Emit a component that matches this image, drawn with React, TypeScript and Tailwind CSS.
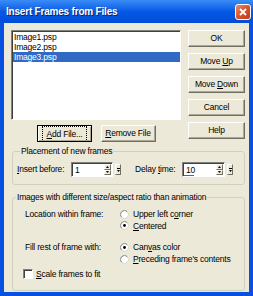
import React from 'react';

const font = "font-['Liberation_Sans',Arial,sans-serif]";

function U({ children }: { children: React.ReactNode }) {
  return <span className="underline underline-offset-1 decoration-1">{children}</span>;
}

function Btn({ children, className = '' }: { children: React.ReactNode; className?: string }) {
  return (
    <div className={`h-[17px] flex items-center justify-center bg-[#ece9d8] border border-t-white border-l-white border-r-[#716f64] border-b-[#716f64] shadow-[inset_-1px_-1px_0_#aca899] leading-none whitespace-nowrap ${className}`}>
      <span>{children}</span>
    </div>
  );
}

function Spin() {
  return (
    <div className="flex flex-col w-[7px] h-full">
      {[0, 1].map((i) => (
        <div key={i} className="flex-1 flex items-center justify-center bg-[#ece9d8] border border-t-white border-l-white border-r-[#716f64] border-b-[#716f64]">
          <svg width="3" height="2" viewBox="0 0 3 2">
            <path d={i === 0 ? 'M1.5 0 L3 2 L0 2 Z' : 'M0 0 L3 0 L1.5 2 Z'} fill="#000" />
          </svg>
        </div>
      ))}
    </div>
  );
}

function Pop() {
  return (
    <div className="w-[6px] h-[11px] flex flex-col items-center justify-center gap-[1px] bg-[#ece9d8] border border-t-white border-l-white border-r-[#716f64] border-b-[#716f64]">
      <div className="w-[3px] h-[1px] bg-black" />
      <svg width="3" height="2" viewBox="0 0 3 2"><path d="M0 0 L3 0 L1.5 2 Z" fill="#000" /></svg>
    </div>
  );
}

function NumField({ value, width, caret }: { value: string; width: string; caret?: boolean }) {
  return (
    <div className="flex items-center gap-[2px]">
      <div className={`relative ${width} h-[15px] flex bg-white border border-t-[#808080] border-l-[#808080] border-b-white border-r-white shadow-[inset_1px_1px_0_#404040]`}>
        <div className="flex-1 pl-[3px] pt-[1px] leading-[12px]">{value}</div>
        <div className="py-[1px] pr-[1px]"><Spin /></div>
        {caret && <div className="absolute left-[1px] bottom-0 w-[10px] h-[1px] bg-[#316ac5]" />}
      </div>
      <Pop />
    </div>
  );
}

function Radio({ checked }: { checked?: boolean }) {
  return (
    <svg width="9" height="9" viewBox="0 0 9 9" className="shrink-0">
      <circle cx="4.5" cy="4.5" r="4" fill="#fff" />
      <path d="M1.67 7.33 A4 4 0 0 1 7.33 1.67" stroke="#808080" fill="none" />
      <path d="M7.33 1.67 A4 4 0 0 1 1.67 7.33" stroke="#d8d5c6" fill="none" />
      {checked && <circle cx="4.5" cy="4.5" r="1.4" fill="#000" />}
    </svg>
  );
}

export default function App() {
  const files = ['Image1.psp', 'Image2.psp', 'Image3.psp'];
  return (
    <div className={`w-[253px] h-[296px] flex flex-col bg-[#0750e0] text-black text-[8.5px] tracking-[-0.2px] whitespace-nowrap ${font}`}>
      <div className="h-[23px] flex items-center justify-between pl-[6px] pr-[2px] bg-gradient-to-b from-[#3a8cf6] via-[#0558e6] to-[#034cd6]">
        <span className="text-white font-bold text-[10px] [text-shadow:1px_1px_0_#0a246a]">Insert Frames from Files</span>
        <div className="w-[16px] h-[16px] rounded-[3px] border border-white bg-gradient-to-br from-[#e88a6a] via-[#d9532b] to-[#c13b14] flex items-center justify-center">
          <svg width="8" height="8" viewBox="0 0 8 8">
            <path d="M1 1 L7 7 M7 1 L1 7" stroke="#fff" strokeWidth="1.8" />
          </svg>
        </div>
      </div>

      <div className="flex-1 mx-[4px] mb-[4px] bg-[#ece9d8] flex flex-col">
        <div className="flex pl-[7px] pt-[7px]">
          <div className="w-[170px] flex flex-col">
            <div className="h-[90px] bg-white border border-t-[#808080] border-l-[#808080] border-b-white border-r-white shadow-[inset_1px_1px_0_#404040] pt-[1px] pl-[1px]">
              {files.map((f, i) => (
                <div key={f} className={`h-[10px] leading-[10px] pl-[1px] ${i === 2 ? 'bg-[#316ac5] text-white' : ''}`}>{f}</div>
              ))}
            </div>
            <div className="flex justify-center gap-[9px] mt-[5px]">
              <div className="w-[55px] h-[17px] border border-black">
                <Btn className="h-full border-0 border-t border-l">
                  <span className="border border-dotted border-black px-[3px] py-[2px]"><U>A</U>dd File...</span>
                </Btn>
              </div>
              <Btn className="w-[55px]"><U>R</U>emove File</Btn>
            </div>
          </div>
          <div className="ml-[7px] w-[57px] flex flex-col gap-[6px]">
            <Btn>OK</Btn>
            <Btn>Move <U>U</U>p</Btn>
            <Btn>Move <U>D</U>own</Btn>
            <Btn>Cancel</Btn>
            <Btn>Help</Btn>
          </div>
        </div>

        <fieldset className="mt-[4px] ml-[8px] w-[233px] border border-[#d0d0bf] rounded-[3px] px-[4px] pb-[7px]">
          <legend className="ml-[3px] px-[1px] leading-[10px]">Placement of new frames</legend>
          <div className="flex items-center pt-[6px]">
            <span className="w-[54px]"><U>I</U>nsert before:</span>
            <NumField value="1" width="w-[42px]" />
            <span className="ml-[14px] w-[47px]">Delay <U>t</U>ime:</span>
            <NumField value="10" width="w-[43px]" caret />
          </div>
        </fieldset>

        <fieldset className="mt-[7px] ml-[8px] w-[233px] border border-[#d0d0bf] rounded-[3px] pb-[10px]">
          <legend className="ml-[3px] px-[1px] leading-[10px]">Images with different size/aspect ratio than animation</legend>
          <div className="grid grid-cols-[95px_1fr] pl-[12px] pt-[6px] leading-[12px]">
            <span className="h-[12px]">Location within frame:</span>
            <div className="flex items-center gap-[4px] h-[12px]"><Radio /><span>Upper left c<U>o</U>rner</span></div>
            <span className="h-[12px]" />
            <div className="flex items-center gap-[4px] h-[11px]"><Radio checked /><span><U>C</U>entered</span></div>
            <span className="h-[12px] mt-[9px]">Fill rest of frame with:</span>
            <div className="flex items-center gap-[4px] h-[12px] mt-[9px]"><Radio checked /><span>Can<U>v</U>as color</span></div>
            <span className="h-[12px]" />
            <div className="flex items-center gap-[4px] h-[12px]"><Radio /><span><U>P</U>receding frame's contents</span></div>
          </div>
          <div className="flex items-center gap-[3px] pl-[10px] mt-[3px] h-[12px]">
            <div className="w-[10px] h-[10px] bg-white border border-t-[#808080] border-l-[#808080] border-b-white border-r-white shadow-[inset_1px_1px_0_#404040]" />
            <span><U>S</U>cale frames to fit</span>
          </div>
        </fieldset>
      </div>
    </div>
  );
}
